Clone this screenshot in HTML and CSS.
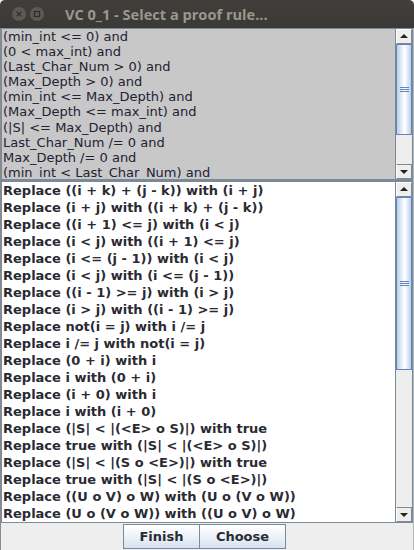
FILE: index.html
```html
<!DOCTYPE html>
<html>
<head>
<meta charset="utf-8">
<link rel="stylesheet" href="styles.css">
</head>
<body>
<div class="window">
  <div class="titlebar">
    <span class="wbtn"><svg width="14" height="14" viewBox="0 0 14 14"><circle cx="7" cy="7" r="7" fill="#5a5953"/><path d="M4.6 4.6 L9.4 9.4 M9.4 4.6 L4.6 9.4" stroke="#2f2e2a" stroke-width="1.3"/></svg></span>
    <span class="wbtn"><svg width="14" height="14" viewBox="0 0 14 14"><circle cx="7" cy="7" r="7" fill="#5a5953"/><rect x="4.5" y="4.5" width="5" height="5" fill="none" stroke="#2f2e2a" stroke-width="1.2"/></svg></span>
    <span class="title">VC 0_1 - Select a proof rule...</span>
  </div>
  <div class="body">
    <div class="pane top">
      <div class="view">
        <div class="line">(min_int &lt;= 0) and</div>
        <div class="line">(0 &lt; max_int) and</div>
        <div class="line">(Last_Char_Num &gt; 0) and</div>
        <div class="line">(Max_Depth &gt; 0) and</div>
        <div class="line">(min_int &lt;= Max_Depth) and</div>
        <div class="line">(Max_Depth &lt;= max_int) and</div>
        <div class="line">(|S| &lt;= Max_Depth) and</div>
        <div class="line">Last_Char_Num /= 0 and</div>
        <div class="line">Max_Depth /= 0 and</div>
        <div class="line">(min_int &lt; Last_Char_Num) and</div>
      </div>
      <div class="sbar">
        <div class="arrow up"></div>
        <div class="track">
          <div class="thumb t1"><span class="grip"></span></div>
        </div>
        <div class="arrow down"></div>
      </div>
    </div>
    <div class="pane list">
      <div class="view">
        <div class="item">Replace ((i + k) + (j - k)) with (i + j)</div>
        <div class="item">Replace (i + j) with ((i + k) + (j - k))</div>
        <div class="item">Replace ((i + 1) &lt;= j) with (i &lt; j)</div>
        <div class="item">Replace (i &lt; j) with ((i + 1) &lt;= j)</div>
        <div class="item">Replace (i &lt;= (j - 1)) with (i &lt; j)</div>
        <div class="item">Replace (i &lt; j) with (i &lt;= (j - 1))</div>
        <div class="item">Replace ((i - 1) &gt;= j) with (i &gt; j)</div>
        <div class="item">Replace (i &gt; j) with ((i - 1) &gt;= j)</div>
        <div class="item">Replace not(i = j) with i /= j</div>
        <div class="item">Replace i /= j with not(i = j)</div>
        <div class="item">Replace (0 + i) with i</div>
        <div class="item">Replace i with (0 + i)</div>
        <div class="item">Replace (i + 0) with i</div>
        <div class="item">Replace i with (i + 0)</div>
        <div class="item">Replace (|S| &lt; |(&lt;E&gt; o S)|) with true</div>
        <div class="item">Replace true with (|S| &lt; |(&lt;E&gt; o S)|)</div>
        <div class="item">Replace (|S| &lt; |(S o &lt;E&gt;)|) with true</div>
        <div class="item">Replace true with (|S| &lt; |(S o &lt;E&gt;)|)</div>
        <div class="item">Replace ((U o V) o W) with (U o (V o W))</div>
        <div class="item">Replace (U o (V o W)) with ((U o V) o W)</div>
      </div>
      <div class="sbar">
        <div class="arrow up"></div>
        <div class="track">
          <div class="thumb t2"><span class="grip"></span></div>
        </div>
        <div class="arrow down"></div>
      </div>
    </div>
    <div class="buttons">
      <button class="btn">Finish</button>
      <button class="btn">Choose</button>
    </div>
  </div>
</div>
</body>
</html>
```

FILE: styles.css
```css
html, body {
  margin: 0;
  padding: 0;
  background: #eeeeee;
}
.window {
  width: 414px;
  height: 550px;
  display: flex;
  flex-direction: column;
  overflow: hidden;
  font-family: "DejaVu Sans", sans-serif;
}
.titlebar {
  height: 28px;
  flex: none;
  background: linear-gradient(#403f3b, #3a3935);
  display: flex;
  align-items: center;
  padding-left: 12px;
  gap: 4px;
  box-sizing: border-box;
  border-radius: 5px 5px 0 0;
}
.wbtn {
  display: flex;
  width: 14px;
  height: 14px;
}
.title {
  margin-left: 17px;
  color: #9a978f;
  font-family: "Open Sans", "DejaVu Sans", sans-serif;
  font-weight: 700;
  font-size: 14.6px;
  letter-spacing: 0;
}
.body {
  flex: 1;
  display: flex;
  flex-direction: column;
  border-left: 1px solid #8a8a8a;
  border-right: 1px solid #b5b5b5;
  background: #eeeeee;
}
.pane {
  display: flex;
  border: 1px solid #7a8a99;
  box-sizing: border-box;
}
.pane.top {
  height: 152px;
  background: #c8c8c8;
}
.pane.list {
  height: 343px;
  background: #ffffff;
  border-top: 2px solid #7a8a99;
}
.view {
  flex: 1;
  overflow: hidden;
  padding-left: 1px;
}
.line {
  font-size: 13px;
  line-height: 15.1px;
  color: #222233;
  white-space: nowrap;
}
.item {
  font-size: 13px;
  font-weight: 700;
  line-height: 17px;
  color: #2a2a33;
  white-space: nowrap;
}
.sbar {
  width: 16px;
  flex: none;
  display: flex;
  flex-direction: column;
  background: #eeeeee;
  border-left: 1px solid #7a8a99;
}
.arrow {
  height: 15px;
  flex: none;
  background: #eeeeee;
  box-sizing: border-box;
  position: relative;
  border: 1px solid #ffffff;
  border-right-color: #7a8a99;
  border-bottom-color: #7a8a99;
}
.arrow.up {
  border-bottom: 1px solid #7a8a99;
}
.arrow.down {
  border-top: 1px solid #7a8a99;
}
.arrow::after {
  content: "";
  position: absolute;
  left: 3px;
  width: 0;
  height: 0;
  border-left: 4px solid transparent;
  border-right: 4px solid transparent;
}
.arrow.up::after {
  top: 4px;
  border-bottom: 4px solid #222;
}
.arrow.down::after {
  top: 5px;
  border-top: 4px solid #222;
}
.track {
  flex: 1;
  display: flex;
  flex-direction: column;
}
.thumb {
  flex: none;
  box-sizing: border-box;
  border: 1px solid #6382bf;
  background: linear-gradient(90deg, #b8cfe5 0%, #e8f0f9 35%, #ffffff 55%, #dce7f3 80%, #b8cfe5 100%);
  display: flex;
  align-items: center;
  justify-content: center;
}
.thumb.t1 {
  height: 91px;
}
.thumb.t2 {
  height: 173px;
}
.grip {
  width: 9px;
  height: 5px;
  border-top: 1px solid #6382bf;
  border-bottom: 1px solid #6382bf;
  position: relative;
  box-sizing: border-box;
  background: linear-gradient(#6382bf, #6382bf) center / 100% 1px no-repeat;
}
.buttons {
  flex: 1;
  display: flex;
  justify-content: center;
  align-items: flex-start;
  padding-top: 1px;
  padding-right: 5px;
}
.btn {
  font-family: "DejaVu Sans", sans-serif;
  font-weight: 700;
  font-size: 13px;
  color: #2a2a33;
  height: 25px;
  padding: 0;
  border: 1px solid #7a8a99;
  background: linear-gradient(#ffffff, #f1f5fa 40%, #d5e2f0);
  margin: 0;
}
.btn:first-child {
  width: 77px;
}
.btn + .btn {
  width: 86px;
  border-left: none;
}
```
